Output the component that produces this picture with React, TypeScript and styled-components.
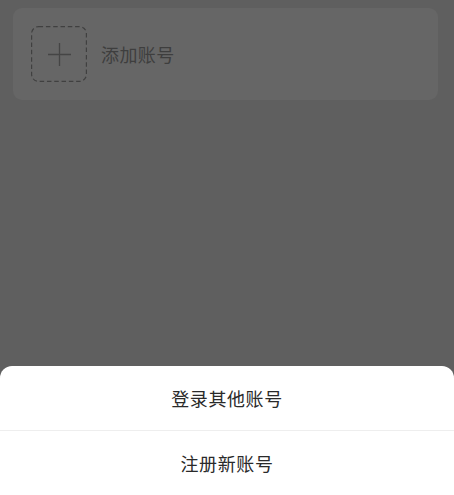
import React from "react";
import styled, { createGlobalStyle } from "styled-components";

const Global = createGlobalStyle`
  html, body { margin: 0; padding: 0; height: 100%; }
  body { background: #5f5f5f; font-family: "Noto Sans CJK SC", "Noto Sans", sans-serif; }
  #root { height: 100%; }
`;

const Page = styled.div`
  height: 100vh;
  display: flex;
  flex-direction: column;
  background: #5f5f5f;
  padding: 8px 16px 0 13px;
  box-sizing: border-box;
  overflow: hidden;
`;

const AddCard = styled.div`
  height: 92px;
  background: #666666;
  border-radius: 9px;
  display: flex;
  align-items: center;
  padding-left: 18px;
  gap: 14px;
`;

const DashedBox = styled.div`
  position: relative;
  width: 56px;
  height: 56px;
  display: flex;
  align-items: center;
  justify-content: center;
`;

const DashOutline = styled.svg`
  position: absolute;
  inset: 0;
`;

const Label = styled.span`
  font-size: 18px;
  color: #3e3e3e;
  letter-spacing: 0.4px;
`;

const Sheet = styled.div`
  margin: auto -16px 0 -13px;
  background: #ffffff;
  border-radius: 12px 12px 0 0;
  display: flex;
  flex-direction: column;
`;

const SheetItem = styled.div<{ $divider?: boolean }>`
  height: 64px;
  display: flex;
  align-items: center;
  justify-content: center;
  font-size: 18px;
  color: #2a2a2a;
  letter-spacing: 0.6px;
  border-bottom: ${(p) => (p.$divider ? "1px solid #eeeeee" : "none")};
`;

export default function App() {
  return (
    <>
      <Global />
      <Page>
        <AddCard>
          <DashedBox>
            <DashOutline width="56" height="56" viewBox="0 0 56 56">
              <rect
                x="0.6"
                y="0.6"
                width="54.8"
                height="54.8"
                rx="7"
                fill="none"
                stroke="#404040"
                strokeWidth="1.2"
                strokeDasharray="4.5 2.8"
              />
            </DashOutline>
            <svg width="23" height="23" viewBox="0 0 23 23">
              <path d="M11.5 0v23M0 11.5h23" stroke="#454545" strokeWidth="1.3" fill="none" />
            </svg>
          </DashedBox>
          <Label>添加账号</Label>
        </AddCard>
        <Sheet>
          <SheetItem $divider>登录其他账号</SheetItem>
          <SheetItem>注册新账号</SheetItem>
        </Sheet>
      </Page>
    </>
  );
}
